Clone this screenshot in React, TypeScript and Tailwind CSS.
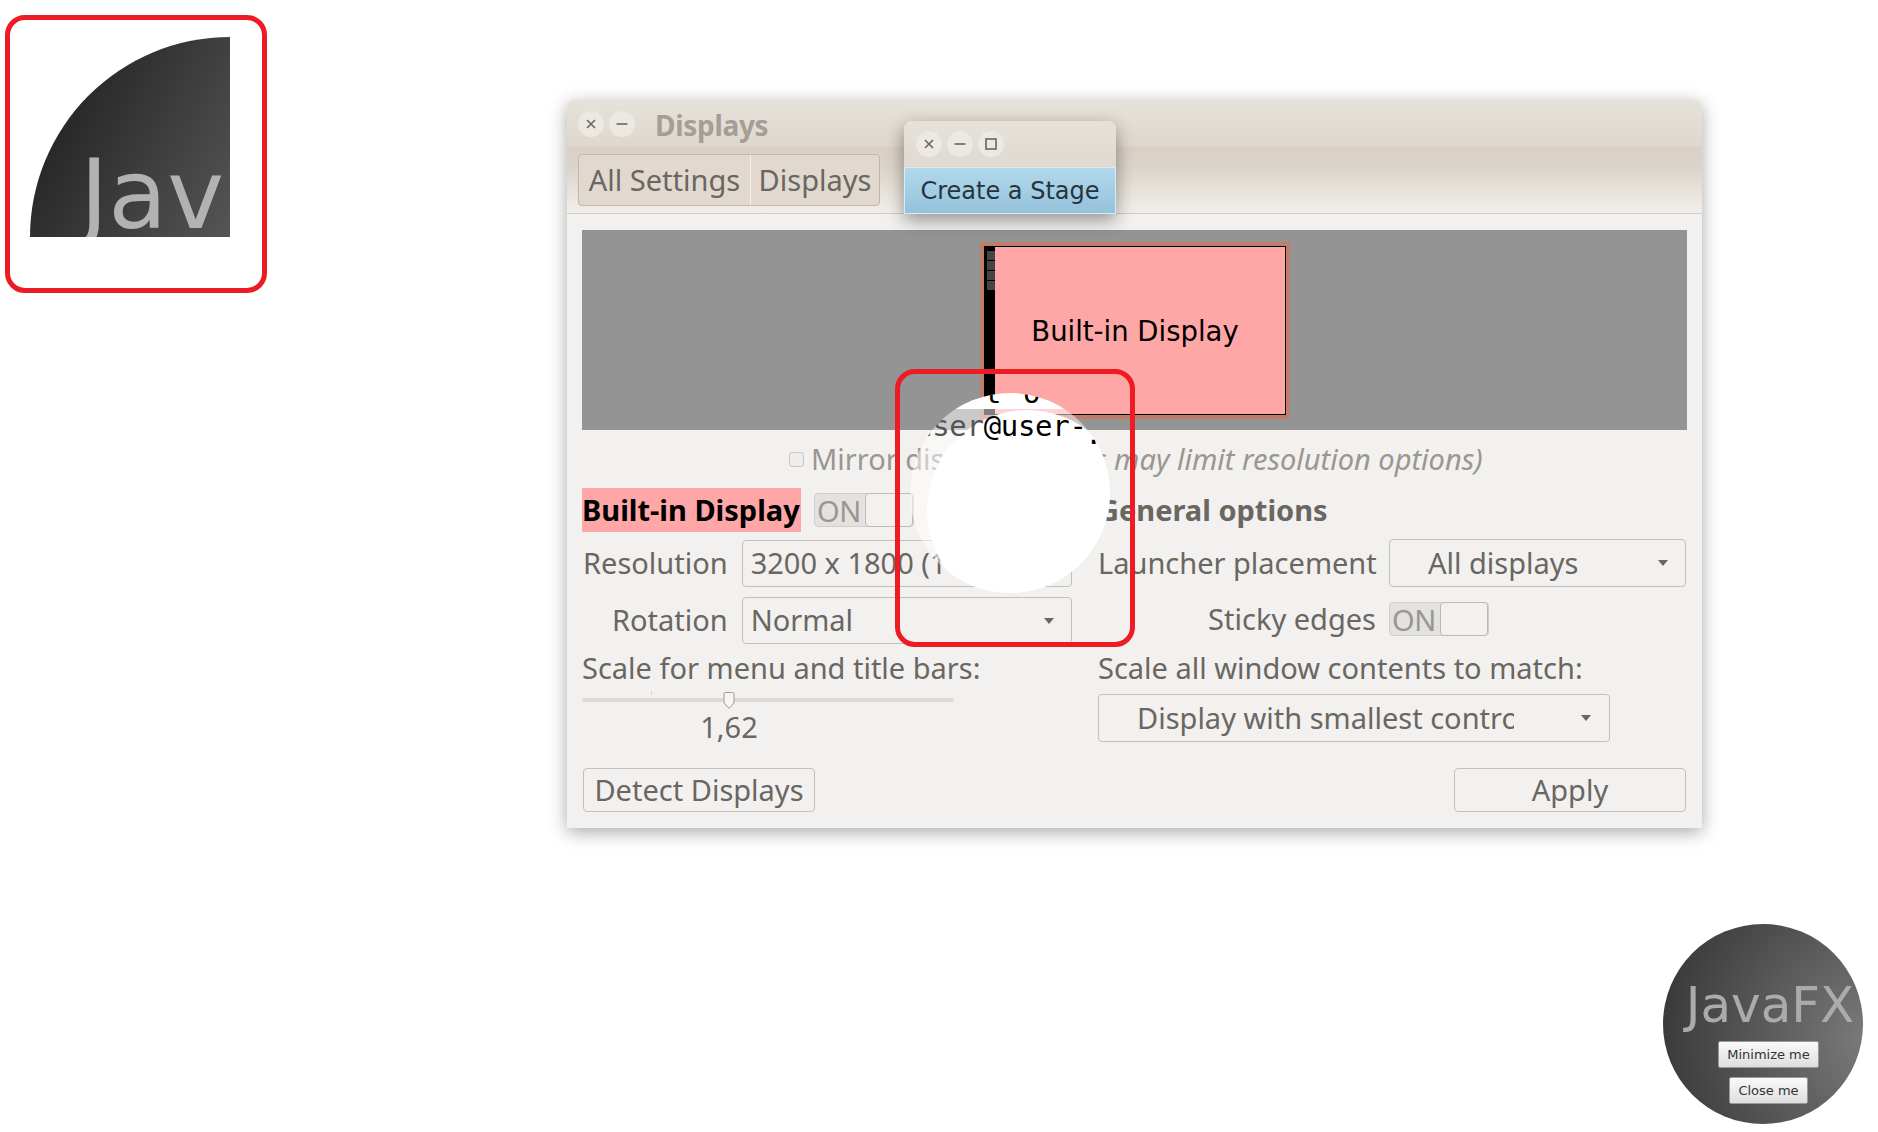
import React from "react";

const ui = "font-['Noto_Sans',sans-serif]";
const dv = "font-['DejaVu_Sans',sans-serif]";
const mono = "font-['DejaVu_Sans_Mono',monospace]";

function Dot({ kind }: { kind: "x" | "min" | "max" }) {
  return (
    <div className="w-[26px] h-[26px] rounded-full bg-[#ece8e2] flex items-center justify-center">
      <svg width="14" height="14" viewBox="0 0 14 14" fill="none" stroke="#6a655f" strokeWidth="1.6">
        {kind === "x" && <path d="M3 3l8 8M11 3l-8 8" />}
        {kind === "min" && <path d="M1.5 7h11" />}
        {kind === "max" && <rect x="2" y="2" width="10" height="10" />}
      </svg>
    </div>
  );
}

function Arrow() {
  return (
    <svg width="10" height="6" viewBox="0 0 10 6" className="shrink-0">
      <path d="M0 0h10L5 6z" fill="#6a6661" />
    </svg>
  );
}

function Combo({ text, className, textClass }: { text: string; className: string; textClass: string }) {
  return (
    <div className={`flex items-center border border-[#c2c0bd] rounded-[4px] bg-[#f2f1ef] ${className}`}>
      <div className={`overflow-hidden whitespace-nowrap ${textClass}`}>{text}</div>
      <div className="ml-auto">
        <Arrow />
      </div>
    </div>
  );
}

function Toggle({ className }: { className: string }) {
  return (
    <div className={`flex items-center h-[34px] w-[100px] bg-[#e3e2e0] border border-[#d0cfcc] rounded-[4px] ${className}`}>
      <div className="w-[51px] pl-[2px] text-[#9a9690] text-[29px] leading-none tracking-[-0.5px]">ON</div>
      <div className="w-[49px] h-[34px] bg-[#f2f1ef] border border-[#bdbbb8] rounded-[4px]" />
    </div>
  );
}

export default function App() {
  return (
    <div className={`relative w-[1878px] h-[1132px] overflow-hidden bg-white ${ui}`}>
      {/* Main window */}
      <div className="absolute left-[567px] top-[100px] w-[1135px] h-[728px] flex flex-col rounded-t-[8px] bg-[#f2f1ef] shadow-[0_4px_18px_rgba(0,0,0,0.35)] text-[#6a6661]">
        <div className="h-[47px] shrink-0 flex items-center pl-[11px] rounded-t-[8px] bg-[linear-gradient(#e6e2da,#dfd7ce)]">
          <div className="flex gap-[5px]">
            <Dot kind="x" />
            <Dot kind="min" />
          </div>
          <div className="ml-[20px] mt-[2px] text-[28px] font-bold leading-none text-[#a49e97] tracking-[-0.3px]">Displays</div>
        </div>
        <div className="h-[67px] shrink-0 flex items-start pt-[7px] pl-[11px] bg-[linear-gradient(#d9d0c5,#dcd4ca_30%,#f1eeea)] border-b border-[#d2cdc6]">
          <div className="flex h-[52px] items-stretch border border-[#c5b7a8] rounded-[4px] bg-[#e1d9cf] text-[29px]">
            <div className="w-[172px] flex items-center justify-center border-r border-[#f4f1ec]">All Settings</div>
            <div className="w-[128px] flex items-center justify-center">Displays</div>
          </div>
        </div>
        <div className="flex-1 flex flex-col pt-[16px] px-[15px] pb-[16px]">
          {/* Monitor preview */}
          <div className="relative h-[200px] bg-[#949494]">
            <div className={`absolute left-[398px] top-[12px] w-[310px] h-[177px] flex border-[4px] border-[#bd7f6c] ${dv}`}>
              <div className="flex-1 flex border border-black bg-[#ffa6a6]">
                <div className="w-[10px] pt-[4px] bg-black flex flex-col gap-[1px] items-end">
                  <div className="w-[8px] h-[9px] bg-[#444]" />
                  <div className="w-[8px] h-[9px] bg-[#444]" />
                  <div className="w-[8px] h-[9px] bg-[#444]" />
                  <div className="w-[8px] h-[9px] bg-[#444]" />
                </div>
                <div className="flex-1 flex items-center justify-center pr-[10px] pt-[2px] text-[27.5px] text-black leading-none whitespace-nowrap">Built-in Display</div>
              </div>
            </div>
          </div>
          {/* Mirror */}
          <div className="h-[58px] flex items-center text-[#9a9690] text-[29px] whitespace-nowrap">
            <div className="ml-[207px] w-[15px] h-[15px] border border-[#c9c7c4] rounded-[3px] bg-[#eeedeb] mr-[7px]" />
            <span>Mirror displays</span>
            <span className="ml-[37px] italic">(this may limit resolution options)</span>
          </div>
          {/* Two columns */}
          <div className="flex">
            <div className="w-[490px] flex flex-col">
              <div className="h-[44px] flex items-center">
                <div className="h-[44px] w-[219px] bg-[#ffa6a6] flex items-center text-black font-bold text-[29px] whitespace-nowrap">Built-in Display</div>
                <Toggle className="ml-[13px]" />
              </div>
              <div className="mt-[8px] h-[47px] flex items-center">
                <div className="w-[146px] pb-[2px] text-right text-[29px]">Resolution</div>
                <Combo text="3200 x 1800 (16:9)" className="ml-[14px] w-[331px] h-[47px] pl-[8px] pr-[17px]" textClass="pb-[2px] text-[29px]" />
              </div>
              <div className="mt-[10px] h-[47px] flex items-center">
                <div className="w-[146px] pb-[2px] text-right text-[29px]">Rotation</div>
                <Combo text="Normal" className="ml-[14px] w-[331px] h-[47px] pl-[8px] pr-[17px]" textClass="pb-[2px] text-[29px]" />
              </div>
              <div className="h-[48px] flex items-center text-[29px] whitespace-nowrap">Scale for menu and title bars:</div>
              <div className="relative w-[372px] h-[16px] flex items-center">
                <div className="w-full h-[4px] rounded-full bg-[#dcdbd9]" />
                <div className="absolute left-[69px] top-[-1px] w-[1px] h-[4px] bg-[#d4d3d1]" />
                <svg className="absolute left-[141px] top-0" width="12" height="17" viewBox="0 0 12 17">
                  <path d="M1 2a1.5 1.5 0 0 1 1.5-1.5h7A1.5 1.5 0 0 1 11 2v9l-5 5.3L1 11z" fill="#f7f6f5" stroke="#9c9a97" />
                </svg>
              </div>
              <div className="w-[294px] text-center text-[29px] leading-none mt-[4px]">1,62</div>
            </div>
            <div className="ml-[26px] flex-1 flex flex-col">
              <div className="h-[44px] flex items-center font-bold text-[29px]">General options</div>
              <div className="mt-[7px] h-[48px] flex items-center">
                <div className="w-[278px] text-right text-[29px] whitespace-nowrap">Launcher placement</div>
                <Combo text="All displays" className="ml-[13px] w-[297px] h-[48px] pl-[38px] pr-[17px]" textClass="text-[29px]" />
              </div>
              <div className="mt-[15px] h-[34px] flex items-center">
                <div className="w-[278px] text-right text-[29px]">Sticky edges</div>
                <Toggle className="ml-[13px]" />
              </div>
              <div className="mt-[14px] h-[36px] flex items-center text-[29px] whitespace-nowrap">Scale all window contents to match:</div>
              <Combo text="Display with smallest control" className="mt-[8px] w-[512px] h-[48px] pl-[38px] pr-[18px]" textClass="w-[377px] text-[29px]" />
            </div>
          </div>
          {/* Bottom buttons */}
          <div className="mt-auto mx-[1px] flex justify-between">
            <div className="w-[232px] h-[44px] flex items-center justify-center border border-[#c2c0bd] rounded-[4px] text-[29px]">Detect Displays</div>
            <div className="w-[232px] h-[44px] flex items-center justify-center border border-[#c2c0bd] rounded-[4px] text-[29px]">Apply</div>
          </div>
        </div>
      </div>

      {/* Create a Stage window */}
      <div className="absolute left-[904px] top-[121px] w-[212px] h-[93px] flex flex-col rounded-t-[8px] shadow-[0_6px_18px_rgba(0,0,0,0.4)]">
        <div className="h-[46px] flex items-center gap-[5px] pl-[12px] rounded-t-[8px] bg-[linear-gradient(#e6e2da,#dfd9d0)]">
          <Dot kind="x" />
          <Dot kind="min" />
          <Dot kind="max" />
        </div>
        <div className={`h-[47px] flex items-center justify-center border border-[#d8ecf5] bg-[linear-gradient(#b2d9ec,#94c2db)] text-[#26343e] text-[24px] leading-none whitespace-nowrap ${dv}`}>Create a Stage</div>
      </div>

      {/* Quarter stage */}
      <div className={`absolute left-[30px] top-[37px] w-[200px] h-[200px] overflow-hidden rounded-tl-[200px] bg-[linear-gradient(118deg,#191919,#555555)] ${dv}`}>
        <div className="absolute left-[50px] top-[98px] text-[96px] leading-[120px] text-[#b2b2b2] whitespace-nowrap">Jav</div>
      </div>

      {/* Terminal peek circle */}
      <div className="absolute left-[910px] top-[393px] w-[200px] h-[200px] rounded-full overflow-hidden">
        <div className="h-[16px] bg-white" />
        <div className="h-[184px] bg-white/50" />
        <div className="absolute left-[17px] top-[17px] w-[200px] h-[200px] rounded-full bg-white" />
        <div className={`absolute left-[5px] top-[13px] text-[29px] leading-[40px] tracking-[-0.3px] text-black whitespace-pre ${mono}`}>
          <span className="text-[#555]">user</span>@user-
        </div>
        <div className={`absolute left-[175px] top-[21px] text-[29px] leading-[40px] text-black ${mono}`}>.</div>
        <div className={`absolute left-[74px] top-[-20px] text-[29px] leading-[40px] tracking-[2px] text-black whitespace-pre ${mono}`}>t o</div>
      </div>

      {/* Red highlight frames */}
      <div className="absolute left-[5px] top-[15px] w-[262px] h-[278px] border-[5px] border-[#ed1c24] rounded-[20px]" />
      <div className="absolute left-[895px] top-[369px] w-[240px] h-[278px] border-[5px] border-[#ed1c24] rounded-[20px]" />

      {/* JavaFX circle */}
      <div className={`absolute left-[1663px] top-[924px] w-[200px] h-[200px] pl-[11px] rounded-full flex flex-col items-center bg-[radial-gradient(circle_at_105%_58%,#7c7c7c,#2e2e2e_105%)] ${dv}`}>
        <div className="mt-[51px] ml-[3px] text-[50px] leading-[60px] text-[#ababab] whitespace-nowrap">JavaFX</div>
        <div className="mt-[6px] w-[101px] h-[27px] flex items-center justify-center rounded-[2px] border border-[#999] bg-[linear-gradient(#fafafa,#dedede)] text-[13px] text-[#333]">Minimize me</div>
        <div className="mt-[9px] w-[79px] h-[27px] flex items-center justify-center rounded-[2px] border border-[#999] bg-[linear-gradient(#fafafa,#dedede)] text-[13px] text-[#333]">Close me</div>
      </div>
    </div>
  );
}
